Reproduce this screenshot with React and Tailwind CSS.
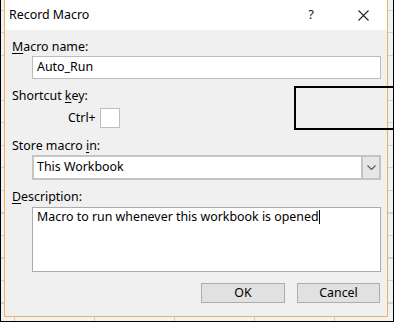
import React from 'react';

const font = { fontFamily: '"Noto Sans", "Segoe UI", Arial, sans-serif' };

const Label = ({ children, className = '' }) => (
  <div className={`h-4 leading-4 text-[12.4px] text-black ${className}`}>{children}</div>
);

const App = () => {
  return (
    <div
      className="relative w-[394px] h-[322px] overflow-hidden border-l border-r border-b border-black bg-[#f2f2f2] bg-[repeating-linear-gradient(to_bottom,transparent_0,transparent_10px,#d2d2d2_10px,#d2d2d2_11px,transparent_11px,transparent_22.5px),repeating-linear-gradient(to_right,transparent_0,transparent_13px,#d2d2d2_13px,#d2d2d2_14px,transparent_14px,transparent_80px)]"
      style={font}
    >
      {/* dialog */}
      <div className="ml-[3px] w-[384px] h-[317px] flex flex-col border-l border-r border-b border-[#f0b160] bg-[#f0f0f0]">
        {/* title bar */}
        <div className="h-[30px] shrink-0 bg-white flex items-center pl-[4px] pr-[18px]">
          <span className="text-[12.4px] text-black">Record Macro</span>
          <span className="ml-auto text-[13px] text-[#222] mr-[44px]">?</span>
          <svg width="11" height="11" viewBox="0 0 11 11" className="mt-[1px]">
            <path d="M0.5 0.5 L10.5 10.5 M10.5 0.5 L0.5 10.5" stroke="#222" strokeWidth="1.1" fill="none" />
          </svg>
        </div>

        {/* body */}
        <div className="flex flex-col pl-[7px] pr-[6px]">
          <Label className="mt-[9px]">
            <span className="underline underline-offset-2">M</span>acro name:
          </Label>
          <div className="mt-[1px] ml-[20px] h-[23px] bg-white border border-[#bdbdbd] flex items-center pl-[4px] text-[12.4px] text-black">
            Auto_Run
          </div>

          <Label className="mt-[9px]">
            Shortcut <span className="underline underline-offset-2">k</span>ey:
          </Label>
          <div className="mt-[4px] flex items-center h-[20px]">
            <span className="ml-[56px] w-[32px] text-[12.4px] text-black">Ctrl+</span>
            <div className="w-[20px] h-[20px] bg-white border border-[#bdbdbd]" />
          </div>

          <Label className="mt-[10px]">
            Store macro <span className="underline underline-offset-2">i</span>n:
          </Label>
          <div className="mt-[1px] ml-[20px] h-[25px] bg-white border-2 border-[#c4c4c4] flex items-center text-[12.4px] text-black">
            <span className="pl-[3px]">This Workbook</span>
            <div className="ml-auto h-full w-[18px] bg-[#e6e6e6] border-l-2 border-[#c4c4c4] flex items-center justify-center">
              <svg width="9" height="5" viewBox="0 0 9 5">
                <path d="M0.5 0.5 L4.5 4.5 L8.5 0.5" stroke="#555" strokeWidth="1.1" fill="none" />
              </svg>
            </div>
          </div>

          <Label className="mt-[9px]">
            <span className="underline underline-offset-2">D</span>escription:
          </Label>
          <div className="mt-[2px] ml-[20px] h-[65px] bg-white border border-[#ababab] pl-[4px] pt-[1px] text-[12.4px] text-black leading-4">
            Macro to run whenever this workbook is opened
            <span className="inline-block w-px h-[14px] bg-black align-[-3px]" />
          </div>

          <div className="mt-[11px] flex justify-end gap-[12px] pr-[1px]">
            <button className="w-[84px] h-[20px] bg-[#e1e1e1] border border-[#adadad] text-[12.4px] text-black leading-none">
              OK
            </button>
            <button className="w-[83px] h-[20px] bg-[#e1e1e1] border border-[#adadad] text-[12.4px] text-black leading-none">
              Cancel
            </button>
          </div>
        </div>
      </div>

      {/* annotation box */}
      <div className="absolute left-[293px] top-[86px] w-[110px] h-[44px] border-2 border-black" />
    </div>
  );
};

export default App;
